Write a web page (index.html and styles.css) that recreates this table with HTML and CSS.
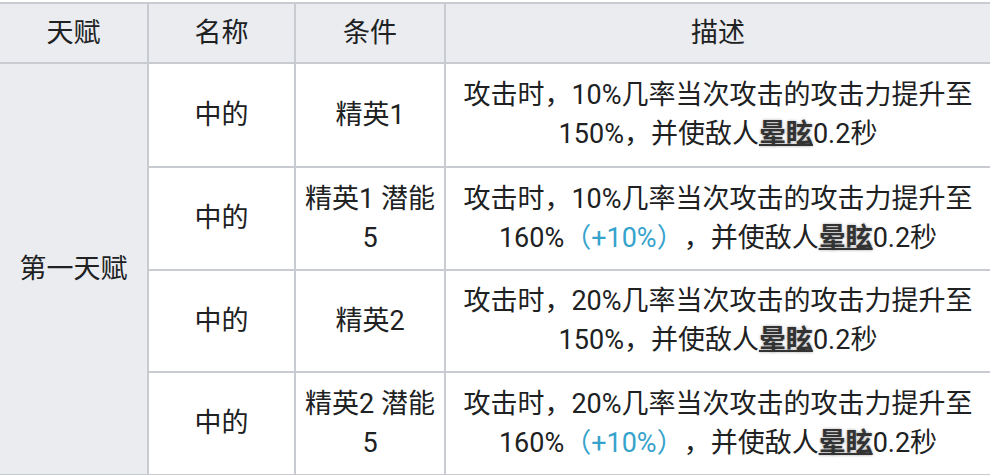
FILE: index.html
```html
<!DOCTYPE html>
<html lang="zh-CN">
<head>
<meta charset="utf-8">
<title>天赋</title>
<link rel="stylesheet" href="styles.css">
</head>
<body>
<table class="talent">
  <colgroup>
    <col class="c1"><col class="c2"><col class="c3"><col class="c4">
  </colgroup>
  <thead>
    <tr class="head"><th>天赋</th><th>名称</th><th>条件</th><th>描述</th></tr>
  </thead>
  <tbody>
    <tr class="r1">
      <th rowspan="4" class="side">第一天赋</th>
      <td>中的</td>
      <td>精英1</td>
      <td>攻击时，10%几率当次攻击的攻击力提升至150%，并使敌人<span class="kw">晕眩</span>0.2秒</td>
    </tr>
    <tr class="r2">
      <td>中的</td>
      <td>精英1 潜能 5</td>
      <td>攻击时，10%几率当次攻击的攻击力提升至160%<span class="up">（+10%）</span>，并使敌人<span class="kw">晕眩</span>0.2秒</td>
    </tr>
    <tr class="r3">
      <td>中的</td>
      <td>精英2</td>
      <td>攻击时，20%几率当次攻击的攻击力提升至150%，并使敌人<span class="kw">晕眩</span>0.2秒</td>
    </tr>
    <tr class="r4">
      <td>中的</td>
      <td>精英2 潜能 5</td>
      <td>攻击时，20%几率当次攻击的攻击力提升至160%<span class="up">（+10%）</span>，并使敌人<span class="kw">晕眩</span>0.2秒</td>
    </tr>
  </tbody>
</table>
</body>
</html>
```

FILE: styles.css
```css
html, body {
  margin: 0;
  padding: 0;
  background: #ffffff;
}
body {
  font-family: Roboto, "Noto Sans CJK SC", sans-serif;
  color: #202122;
  overflow: hidden;
}
.talent {
  border-collapse: collapse;
  table-layout: fixed;
  width: 992px;
  margin: 2px 0 0 -2px;
  font-size: 27px;
  line-height: 39px;
  background: #ffffff;
  text-spacing-trim: space-all;
}
.c1 { width: 149px; }
.c2 { width: 147px; }
.c3 { width: 150px; }
.c4 { width: 546px; }
.talent th, .talent td {
  border: 2px solid #c8ccd1;
  text-align: center;
  vertical-align: middle;
  padding: 0 6px;
  font-weight: normal;
}
.talent th {
  background: #eaecf0;
}
.head th {
  height: 58px;
}
.r1 td { height: 102px; }
.r2 td { height: 101px; }
.r3 td { height: 100px; }
.r4 td { height: 101px; }
.up {
  color: #36a3cc;
}
.kw {
  font-weight: bold;
  color: #333333;
  text-decoration: underline;
  text-decoration-thickness: 2px;
  text-shadow: 0 0 3px rgba(0, 0, 0, 0.35);
}
```
